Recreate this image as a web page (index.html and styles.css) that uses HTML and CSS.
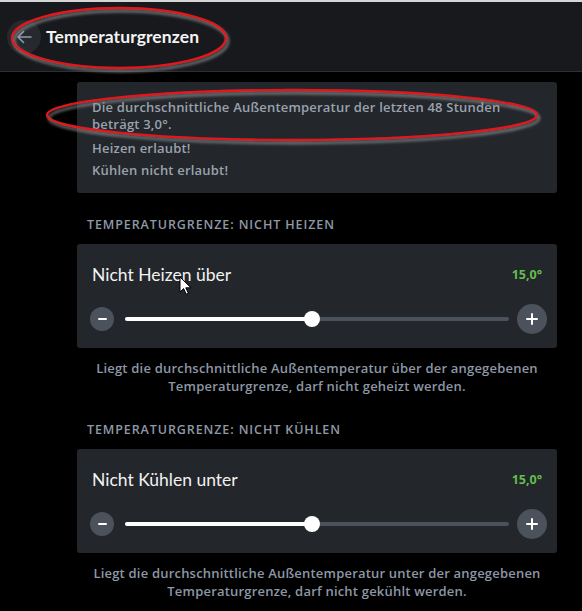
FILE: index.html
```html
<!DOCTYPE html>
<html lang="de">
<head>
    <meta charset="UTF-8">
    <meta name="viewport" content="width=device-width, initial-scale=1.0">
    <title>Temperaturgrenzen</title>
    <link rel="stylesheet" href="styles.css">
</head>
<body>
    <header class="topbar">
        <button class="back-btn" aria-label="Zurück">
            <svg width="16" height="14" viewBox="0 0 16 14">
                <path d="M15 7H2M7.5 1.5L2 7l5.5 5.5" fill="none" stroke="#8d9cb0" stroke-width="1.6" stroke-linecap="round" stroke-linejoin="round"/>
            </svg>
        </button>
        <h1>Temperaturgrenzen</h1>
    </header>

    <main class="content">
        <div class="card info-card">
            <p class="info-text">Die durchschnittliche Außentemperatur der letzten 48 Stunden beträgt 3,0°.</p>
            <p class="status">Heizen erlaubt!</p>
            <p class="status">Kühlen nicht erlaubt!</p>
        </div>

        <h2 class="section-label">Temperaturgrenze: Nicht Heizen</h2>
        <div class="card slider-card">
            <div class="slider-head">
                <span class="slider-title">Nicht Heizen über</span>
                <span class="slider-value">15,0°</span>
            </div>
            <div class="slider-row">
                <button class="step-btn minus" aria-label="Weniger"><span></span></button>
                <div class="track">
                    <div class="fill" style="width: 48.7%"></div>
                    <div class="thumb" style="left: 48.7%"></div>
                </div>
                <button class="step-btn plus" aria-label="Mehr"><span></span></button>
            </div>
        </div>
        <p class="hint">Liegt die durchschnittliche Außentemperatur über der angegebenen Temperaturgrenze, darf nicht geheizt werden.</p>

        <h2 class="section-label second">Temperaturgrenze: Nicht Kühlen</h2>
        <div class="card slider-card">
            <div class="slider-head">
                <span class="slider-title">Nicht Kühlen unter</span>
                <span class="slider-value">15,0°</span>
            </div>
            <div class="slider-row">
                <button class="step-btn minus" aria-label="Weniger"><span></span></button>
                <div class="track">
                    <div class="fill" style="width: 48.7%"></div>
                    <div class="thumb" style="left: 48.7%"></div>
                </div>
                <button class="step-btn plus" aria-label="Mehr"><span></span></button>
            </div>
        </div>
        <p class="hint">Liegt die durchschnittliche Außentemperatur unter der angegebenen Temperaturgrenze, darf nicht gekühlt werden.</p>
    </main>

    <!-- red markings drawn over the screenshot -->
    <svg class="marks" width="582" height="611" viewBox="0 0 582 611">
        <defs>
            <filter id="shade" x="-10%" y="-30%" width="120%" height="160%">
                <feDropShadow dx="2" dy="3" stdDeviation="1.6" flood-color="#9a9a9a" flood-opacity="0.8"/>
            </filter>
        </defs>
        <ellipse cx="119" cy="38" rx="107" ry="30" fill="none" stroke="#e3141b" stroke-width="2.4" filter="url(#shade)"/>
        <ellipse cx="292" cy="115" rx="245" ry="25" fill="none" stroke="#e3141b" stroke-width="2.4" filter="url(#shade)"/>
    </svg>

    <svg class="cursor" width="12" height="19" viewBox="0 0 12 19">
        <path d="M1 1v15l3.6-3.4 2.6 5.6 2.2-1-2.6-5.4H12z" fill="#fff" stroke="#000" stroke-width="1" stroke-linejoin="round"/>
    </svg>
</body>
</html>
```

FILE: styles.css
```css
* {
    margin: 0;
    padding: 0;
    box-sizing: border-box;
}

body {
    font-family: 'Open Sans', 'Noto Sans', sans-serif;
    background-color: #000;
    color: #fff;
    width: 582px;
    min-height: 611px;
    position: relative;
    overflow: hidden;
}

.topbar {
    height: 72px;
    background-color: #17191c;
    border-top: 2px solid #d6d6d6;
    border-bottom: 1px solid #2c2f33;
    display: flex;
    align-items: center;
    padding-left: 7px;
    gap: 5px;
}

.back-btn {
    width: 34px;
    height: 34px;
    border-radius: 50%;
    border: none;
    background-color: #262a2f;
    display: flex;
    align-items: center;
    justify-content: center;
}

.topbar h1 {
    font-family: 'Lato', sans-serif;
    font-size: 17.5px;
    font-weight: 700;
    color: #f4f4f4;
    letter-spacing: 0.1px;
}

.content {
    margin-left: 77px;
    width: 480px;
    padding-top: 10px;
}

.card {
    background-color: #23262b;
    border-radius: 3px;
}

.info-card {
    padding: 17px 15px 14px;
    font-size: 13px;
    font-weight: 600;
    line-height: 17px;
    letter-spacing: 0.2px;
    color: #9aa2ad;
}

.info-text {
    margin-bottom: 7px;
}

.status + .status {
    margin-top: 5px;
}

.section-label {
    margin: 24px 0 11px 10px;
    font-size: 12.5px;
    font-weight: 600;
    line-height: 16px;
    letter-spacing: 0.9px;
    text-transform: uppercase;
    color: #8e99a6;
}

.section-label.second {
    margin-top: 27px;
}

.slider-card {
    padding: 20px 10px 14px 13px;
}

.slider-head {
    display: flex;
    justify-content: space-between;
    align-items: center;
    height: 20px;
    padding: 0 5px 0 2px;
    margin-bottom: 20px;
}

.slider-title {
    font-family: 'Lato', sans-serif;
    font-size: 17.5px;
    color: #f2f2f2;
}

.slider-value {
    font-size: 12.5px;
    font-weight: 700;
    color: #62bd4c;
}

.slider-row {
    display: flex;
    align-items: center;
    height: 30px;
}

.step-btn {
    border: none;
    border-radius: 50%;
    background-color: #4b525c;
    display: flex;
    align-items: center;
    justify-content: center;
    flex-shrink: 0;
}

.step-btn.minus {
    width: 24px;
    height: 24px;
}

.step-btn.plus {
    width: 30px;
    height: 30px;
}

.step-btn span {
    position: relative;
    display: block;
    background-color: #fff;
    border-radius: 1px;
}

.minus span {
    width: 9px;
    height: 2px;
}

.plus span {
    width: 12px;
    height: 2px;
}

.plus span::after {
    content: "";
    position: absolute;
    left: 5px;
    top: -5px;
    width: 2px;
    height: 12px;
    background-color: #fff;
    border-radius: 1px;
}

.track {
    position: relative;
    flex: 1;
    height: 4px;
    margin: 0 8px 0 11px;
    border-radius: 2px;
    background-color: #4b525c;
}

.fill {
    height: 100%;
    border-radius: 2px;
    background-color: #fff;
}

.thumb {
    position: absolute;
    top: 50%;
    width: 16px;
    height: 16px;
    margin: -8px 0 0 -8px;
    border-radius: 50%;
    background-color: #fff;
}

.hint {
    margin-top: 11px;
    padding: 0 5px;
    font-size: 13px;
    font-weight: 600;
    line-height: 18px;
    letter-spacing: 0.2px;
    text-align: center;
    color: #8d97a5;
}

.marks {
    position: absolute;
    left: 0;
    top: 0;
    pointer-events: none;
}

.cursor {
    position: absolute;
    left: 179px;
    top: 276px;
    pointer-events: none;
}
```
